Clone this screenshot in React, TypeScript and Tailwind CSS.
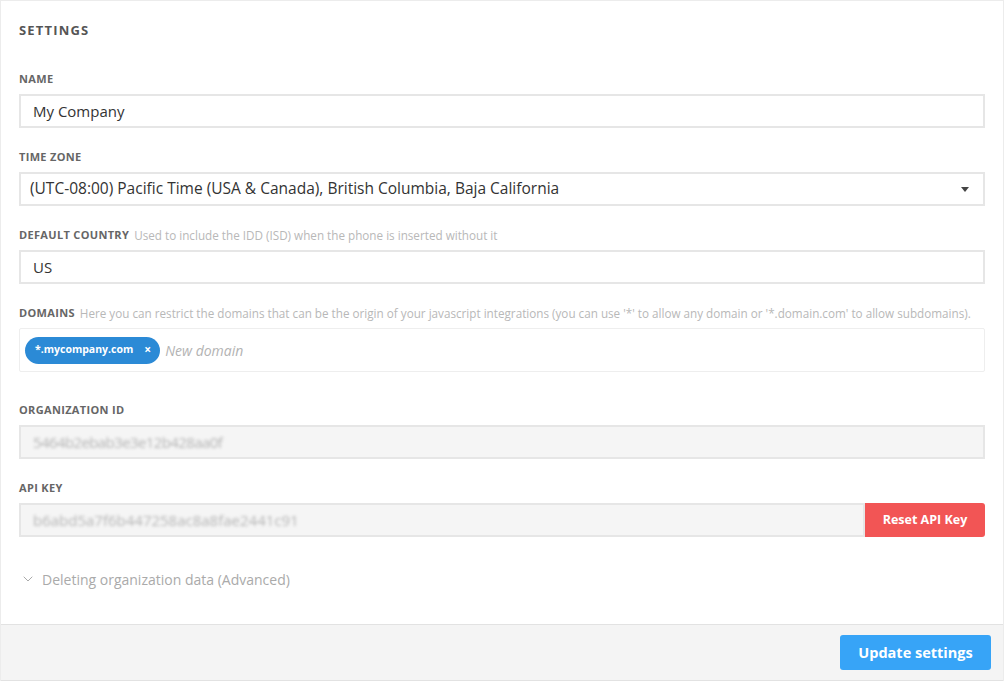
import { ChevronDown } from "lucide-react";

const label = "text-[11px] font-bold uppercase tracking-[0.03em] text-[#666]";
const body = "font-['Open_Sans',sans-serif]";

function Field({
  title,
  hint,
  className = "",
  children,
}: {
  title: string;
  hint?: string;
  className?: string;
  children: React.ReactNode;
}) {
  return (
    <div className={`flex flex-col gap-[8px] ${className}`}>
      <div className="flex h-[14px] items-center gap-[5px] overflow-visible whitespace-nowrap">
        <span className={`${label} leading-[14px]`}>{title}</span>
        {hint ? <span className={`${body} text-[11.7px] leading-[14px] text-[#b8b8b8]`}>{hint}</span> : null}
      </div>
      {children}
    </div>
  );
}

function TextBox({
  value,
  muted,
  blurred,
  className = "",
  textClass = "",
}: {
  value: string;
  muted?: boolean;
  blurred?: boolean;
  className?: string;
  textClass?: string;
}) {
  return (
    <div
      className={`flex h-[34px] items-center border-2 border-[#e6e6e6] px-[12px] ${muted ? "bg-[#f5f5f5]" : "bg-white"} ${className}`}
    >
      <span className={`${body} text-[15px] ${blurred ? "text-[#b5b5b5] blur-[1.4px]" : "text-[#333]"} ${textClass}`}>
        {value}
      </span>
    </div>
  );
}

export default function App() {
  return (
    <div className="min-h-[685px] bg-white font-['Open_Sans',sans-serif]">
      <div className="w-[1004px] border-x border-t border-[#ececec]">
        <div className="flex flex-col gap-[22px] px-[18px] pb-[35px] pt-[20px]">
          <h1 className="mb-[11px] h-[18px] text-[13px] font-bold uppercase leading-[18px] tracking-[0.09em] text-[#555]">
            Settings
          </h1>
          <Field title="Name">
            <TextBox value="My Company" />
          </Field>
          <Field title="Time zone">
            <div className="flex h-[34px] items-center justify-between border-2 border-[#e6e6e6] bg-white pl-[9px] pr-[14px]">
              <span className={`${body} text-[15.5px] text-[#333]`}>
                (UTC-08:00) Pacific Time (USA &amp; Canada), British Columbia, Baja California
              </span>
              <span className="h-0 w-0 border-x-[4px] border-t-[5px] border-x-transparent border-t-[#444]" />
            </div>
          </Field>
          <Field title="Default country" hint="Used to include the IDD (ISD) when the phone is inserted without it">
            <TextBox value="US" />
          </Field>
          <Field
            title="Domains"
            hint="Here you can restrict the domains that can be the origin of your javascript integrations (you can use '*' to allow any domain or '*.domain.com' to allow subdomains)."
          >
            <div className="flex h-[44px] items-center gap-[5px] rounded-[2px] border border-[#eeeeee] bg-white px-[5px]">
              <span className="flex h-[27px] items-center gap-[11px] rounded-full bg-[#2b8ad6] pl-[10px] pr-[9px] text-[10.5px] font-bold text-white">
                *.mycompany.com
                <span className="text-[12px] leading-none">×</span>
              </span>
              <span className={`${body} text-[14px] italic text-[#b3b3b3]`}>New domain</span>
            </div>
          </Field>
          <Field title="Organization ID" className="mt-[9px]">
            <TextBox value="5464b2ebab3e3e12b428aa0f" muted blurred textClass="tracking-[-0.04em] text-[13.5px]" />
          </Field>
          <Field title="API Key">
            <div className="flex">
              <TextBox value="b6abd5a7f6b447258ac8a8fae2441c91" muted blurred className="flex-1" />
              <button className="h-[34px] w-[120px] rounded-r-[3px] bg-[#f25555] text-[12.5px] font-bold text-white">
                Reset API Key
              </button>
            </div>
          </Field>
          <div className={`${body} mt-[10px] flex h-[20px] items-center gap-[6px] pl-[1px] text-[14px] text-[#aaa]`}>
            <ChevronDown className="size-[16px]" strokeWidth={1.5} />
            Deleting organization data (Advanced)
          </div>
        </div>
        <div className="flex h-[57px] items-center justify-end border-y border-[#e2e2e2] bg-[#f4f4f4] pr-[12px]">
          <button className="h-[35px] w-[151px] rounded-[3px] bg-[#37a4f7] text-[14.5px] font-bold text-white">
            Update settings
          </button>
        </div>
      </div>
    </div>
  );
}
